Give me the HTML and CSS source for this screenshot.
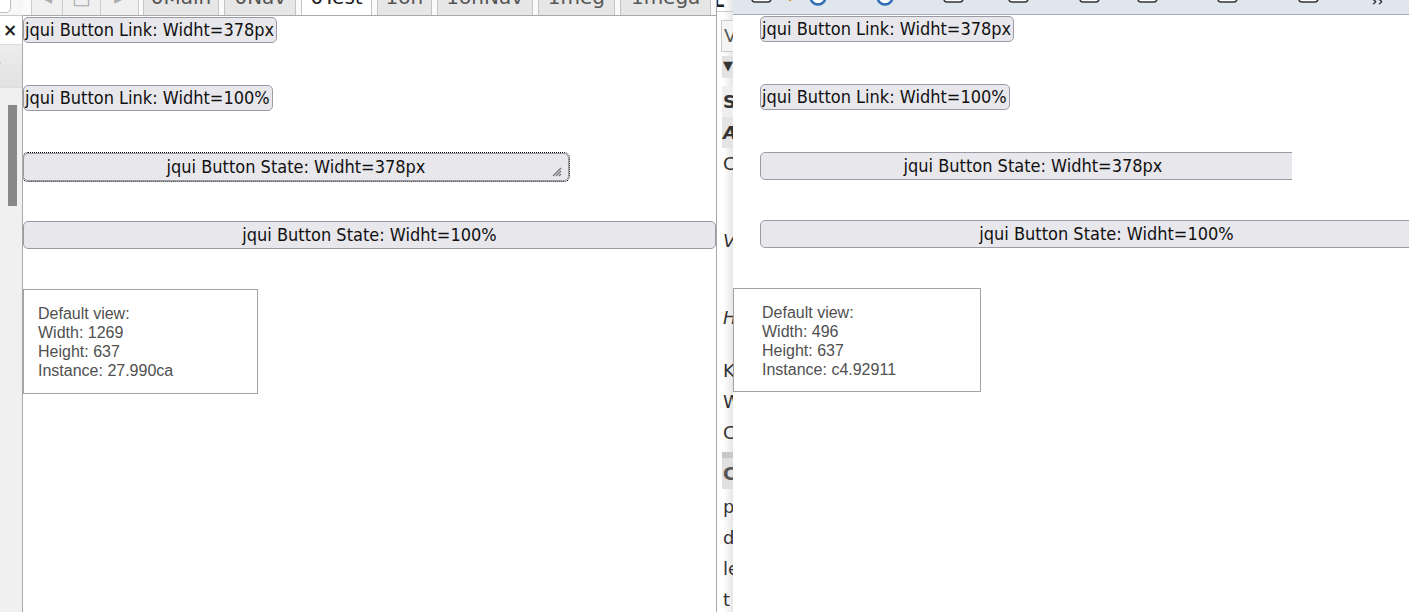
FILE: index.html
```html
<!DOCTYPE html>
<html lang="en">
<head>
    <meta charset="UTF-8">
    <title>jqui Button Test</title>
    <link rel="stylesheet" href="styles.css">
</head>
<body>
    <div class="screen">
        <!-- left window -->
        <div class="win-left">
            <div class="corner"><span class="corner-box"></span></div>
            <div class="tabs">
                <span class="nav nav-prev"><span class="cut">◂</span></span>
                <span class="nav nav-home"><span class="cut">□</span></span>
                <span class="nav nav-next"><span class="cut">▸</span></span>
                <span class="tab tab-main"><span class="cut">0Main</span></span>
                <span class="tab tab-nav"><span class="cut">0Nav</span></span>
                <span class="tab tab-test active"><span class="cut">0Test</span></span>
                <span class="tab tab-on"><span class="cut">1on</span></span>
                <span class="tab tab-onnav"><span class="cut">1onNav</span></span>
                <span class="tab tab-meg"><span class="cut">1meg</span></span>
                <span class="tab tab-mega"><span class="cut">1mega</span></span>
            </div>
            <div class="sidebar">
                <div class="side-close">×</div>
                <div class="side-drop"><span>▾</span></div>
                <div class="side-scroll"><div class="thumb"></div></div>
            </div>
            <div class="content">
                <div class="row"><a class="btn-link">jqui Button Link: Widht=378px</a></div>
                <div class="row"><a class="btn-link">jqui Button Link: Widht=100%</a></div>
                <div class="row">
                    <div class="btn-state fixed focused">
                        jqui Button State: Widht=378px
                        <svg class="grip" width="10" height="10" viewBox="0 0 10 10">
                            <path d="M9 1 L1 9 M9 4 L4 9 M9 7 L7 9" stroke="#777" stroke-width="1.3"/>
                        </svg>
                    </div>
                </div>
                <div class="row"><div class="btn-state full">jqui Button State: Widht=100%</div></div>
                <div class="info">
                    Default view:<br>
                    Width: 1269<br>
                    Height: 637<br>
                    Instance: 27.990ca
                </div>
            </div>
        </div>

        <!-- window behind, mostly covered -->
        <div class="win-mid">
            <div class="mid-top">L</div>
            <div class="mid-box">V</div>
            <div class="mid-bar">▼</div>
            <div class="mid-ln mid-s">S</div>
            <div class="mid-ln mid-a">A</div>
            <div class="mid-ln">C</div>
            <div class="mid-ln mid-gap italic">V</div>
            <div class="mid-ln mid-gap italic">H</div>
            <div class="mid-ln mid-gap2">K</div>
            <div class="mid-ln">W</div>
            <div class="mid-ln">C</div>
            <div class="mid-sep"></div>
            <div class="mid-ln mid-c">C</div>
            <div class="mid-ln">p</div>
            <div class="mid-ln">d</div>
            <div class="mid-ln">le</div>
            <div class="mid-ln">t</div>
        </div>

        <!-- right window -->
        <div class="win-right">
            <div class="toolbar">
                <svg width="676" height="14" viewBox="0 0 676 14">
                    <rect x="19" y="-8" width="19" height="10" rx="3" fill="#fff" stroke="#333" stroke-width="1.5"/>
                    <circle cx="57" cy="0" r="1.2" fill="#e08a20"/>
                    <circle cx="85" cy="-3" r="7.5" fill="#fff" stroke="#2f6db5" stroke-width="2.5"/>
                    <circle cx="85" cy="-3" r="3" fill="#2f6db5"/>
                    <circle cx="152" cy="-3" r="7.5" fill="#fff" stroke="#2f6db5" stroke-width="2.5"/>
                    <circle cx="152" cy="-3" r="3" fill="#2f6db5"/>
                    <rect x="211" y="-8" width="19" height="10" rx="3" fill="#fff" stroke="#333" stroke-width="1.5"/>
                    <rect x="276" y="-8" width="19" height="10" rx="3" fill="#fff" stroke="#333" stroke-width="1.5"/>
                    <rect x="347" y="-8" width="19" height="10" rx="3" fill="#fff" stroke="#333" stroke-width="1.5"/>
                    <rect x="405" y="-8" width="19" height="10" rx="3" fill="#fff" stroke="#333" stroke-width="1.5"/>
                    <rect x="485" y="-8" width="19" height="10" rx="3" fill="#fff" stroke="#333" stroke-width="1.5"/>
                    <rect x="566" y="-8" width="19" height="10" rx="3" fill="#fff" stroke="#333" stroke-width="1.5"/>
                    <path d="M639 -2 L643 2 M645 -2 L649 2 M643 2 L640 4 M649 2 L646 4" stroke="#333" stroke-width="1.5" fill="none"/>
                </svg>
            </div>
            <div class="content-right">
                <div class="row pad"><a class="btn-link">jqui Button Link: Widht=378px</a></div>
                <div class="row pad"><a class="btn-link">jqui Button Link: Widht=100%</a></div>
                <div class="row pad">
                    <div class="clip-state"><div class="btn-state fixed">jqui Button State: Widht=378px</div></div>
                </div>
                <div class="row pad"><div class="btn-state full">jqui Button State: Widht=100%</div></div>
                <div class="info info-right">
                    Default view:<br>
                    Width: 496<br>
                    Height: 637<br>
                    Instance: c4.92911
                </div>
            </div>
        </div>
    </div>
</body>
</html>
```

FILE: styles.css
```css
body {
    margin: 0;
    background: #fff;
    font-family: "DejaVu Sans Condensed", "DejaVu Sans", sans-serif;
    overflow: hidden;
}
.screen {
    display: flex;
    height: 612px;
    width: 1409px;
    overflow: hidden;
}

/* left window */
.win-left {
    width: 716px;
    flex: none;
    display: grid;
    grid-template-columns: 23px 1fr;
    grid-template-rows: 16px 1fr;
}
.corner {
    background: #f7f7f7;
    border-bottom: 1px solid #c8c8c8;
    overflow: hidden;
}
.corner-box {
    display: block;
    width: 10px;
    height: 12px;
    margin-top: -1px;
    border: 1px solid #bbb;
    border-left: none;
    border-radius: 0 0 5px 0;
    background: #fff;
}
.tabs {
    display: flex;
    align-items: stretch;
    border-bottom: 1px solid #a9a9a9;
    background: #fafafa;
    overflow: hidden;
    padding-left: 8px;
    font-family: "DejaVu Sans", sans-serif;
}
.tabs .nav {
    background: #f0f0f0;
    border-right: 1px solid #ccc;
    color: #aaa;
    text-align: center;
    overflow: hidden;
}
.nav-prev { width: 30px; border-left: 1px solid #ccc; }
.nav-home { width: 37px; }
.nav-next { width: 37px; margin-right: 4px; }
.tabs .tab {
    background: #e6e6e6;
    border: 1px solid #c4c4c4;
    border-top: none;
    border-bottom: none;
    margin-right: 5px;
    text-align: center;
    color: #555;
    overflow: hidden;
}
.tabs .tab.active {
    background: #fff;
    color: #222;
}
.cut {
    display: block;
    font-size: 20px;
    line-height: 20px;
    margin-top: -13px;
}
.tab-main { width: 75px; }
.tab-nav { width: 70px; }
.tab-test { width: 69px; }
.tab-on { width: 53px; }
.tab-onnav { width: 94px; }
.tab-meg { width: 76px; }
.tab-mega { width: 89px; }

.sidebar {
    border-right: 1px solid #a8a8a8;
    background: #f0f0f0;
    display: flex;
    flex-direction: column;
}
.side-close {
    height: 28px;
    background: #fff;
    font-family: "DejaVu Sans", sans-serif;
    font-size: 17px;
    font-weight: bold;
    line-height: 28px;
    padding-left: 3px;
    color: #222;
}
.side-drop {
    height: 42px;
    background: linear-gradient(#ededed, #e2e2e2);
    border-top: 1px solid #ddd;
    border-bottom: 1px solid #ddd;
    overflow: hidden;
}
.side-drop span {
    display: block;
    font-size: 12px;
    line-height: 12px;
    margin: 13px 0 0 -5px;
    color: #555;
}
.side-scroll {
    flex: 1;
    padding: 17px 0 0 8px;
}
.thumb {
    width: 9px;
    height: 101px;
    background: #888;
}

.content {
    padding-top: 1px;
    overflow: hidden;
}
.row {
    height: 68px;
}
.btn-link {
    display: inline-block;
    height: 24px;
    line-height: 24px;
    padding: 0 2px 0 1px;
    font-size: 18px;
    color: #111;
    background: #e8e7ec;
    border: 1px solid #9b9aa5;
    border-radius: 5px;
    white-space: nowrap;
}
.btn-state {
    position: relative;
    box-sizing: border-box;
    height: 28px;
    line-height: 26px;
    font-size: 18px;
    color: #111;
    text-align: center;
    background: #e8e7ec;
    border: 1px solid #9b9aa5;
    border-radius: 5px;
    white-space: nowrap;
}
.btn-state.fixed { width: 546px; }
.btn-state.full { width: 693px; }
.btn-state.focused {
    outline: 1px dotted #000;
}
.grip {
    position: absolute;
    right: 6px;
    bottom: 3px;
}
.info {
    box-sizing: border-box;
    width: 235px;
    height: 105px;
    padding: 14px 0 0 14px;
    border: 1px solid #a3a3a3;
    font-family: "Liberation Sans", Arial, sans-serif;
    font-size: 16px;
    line-height: 19px;
    color: #505050;
}

/* middle window */
.win-mid {
    width: 16px;
    flex: none;
    border-left: 1px solid #a8a8a8;
    background: linear-gradient(to right, #fff 40%, #e6e6e6);
    overflow: hidden;
    font-family: "DejaVu Sans", sans-serif;
    font-size: 18px;
    color: #333;
}
.mid-top {
    height: 15px;
    line-height: 10px;
    margin-top: -4px;
    margin-left: -4px;
    font-weight: bold;
    color: #222;
    border-bottom: 1px solid #ccc;
}
.mid-box {
    margin: 8px 0 0 4px;
    height: 30px;
    line-height: 30px;
    padding-left: 2px;
    border: 1px solid #ccc;
    border-right: none;
    background: #f4f4f4;
    color: #555;
}
.mid-bar {
    margin: 4px 0 0 5px;
    height: 22px;
    line-height: 20px;
    padding-left: 1px;
    background: #e2e2e2;
    font-size: 13px;
    color: #333;
}
.mid-ln {
    height: 31px;
    line-height: 31px;
    padding-left: 6px;
}
.mid-s {
    margin: 8px 0 0 5px;
    padding-left: 1px;
    font-weight: bold;
    background: #eee;
}
.mid-a {
    margin-left: 5px;
    padding-left: 1px;
    font-weight: bold;
    font-style: italic;
    background: #e4e4e4;
}
.italic { font-style: italic; }
.mid-gap { margin-top: 46px; }
.mid-gap2 { margin-top: 22px; }
.mid-sep {
    margin: 4px 0 0 5px;
    height: 6px;
    background: #c8c8c8;
}
.mid-c {
    margin: 0 0 2px 5px;
    padding-left: 1px;
    font-weight: bold;
    background: #e0e0e0;
    color: #555;
}

/* right window */
.win-right {
    width: 676px;
    flex: none;
    display: flex;
    flex-direction: column;
}
.toolbar {
    height: 14px;
    background: #dfe6ee;
    border-bottom: 1px solid #a3adb8;
    overflow: hidden;
}
.toolbar svg {
    display: block;
    overflow: visible;
}
.content-right {
    padding-top: 1px;
    overflow: hidden;
}
.row.pad {
    padding-left: 27px;
}
.clip-state {
    width: 532px;
    overflow: hidden;
}
.info-right {
    width: 248px;
    height: 104px;
    padding-left: 28px;
}
```
